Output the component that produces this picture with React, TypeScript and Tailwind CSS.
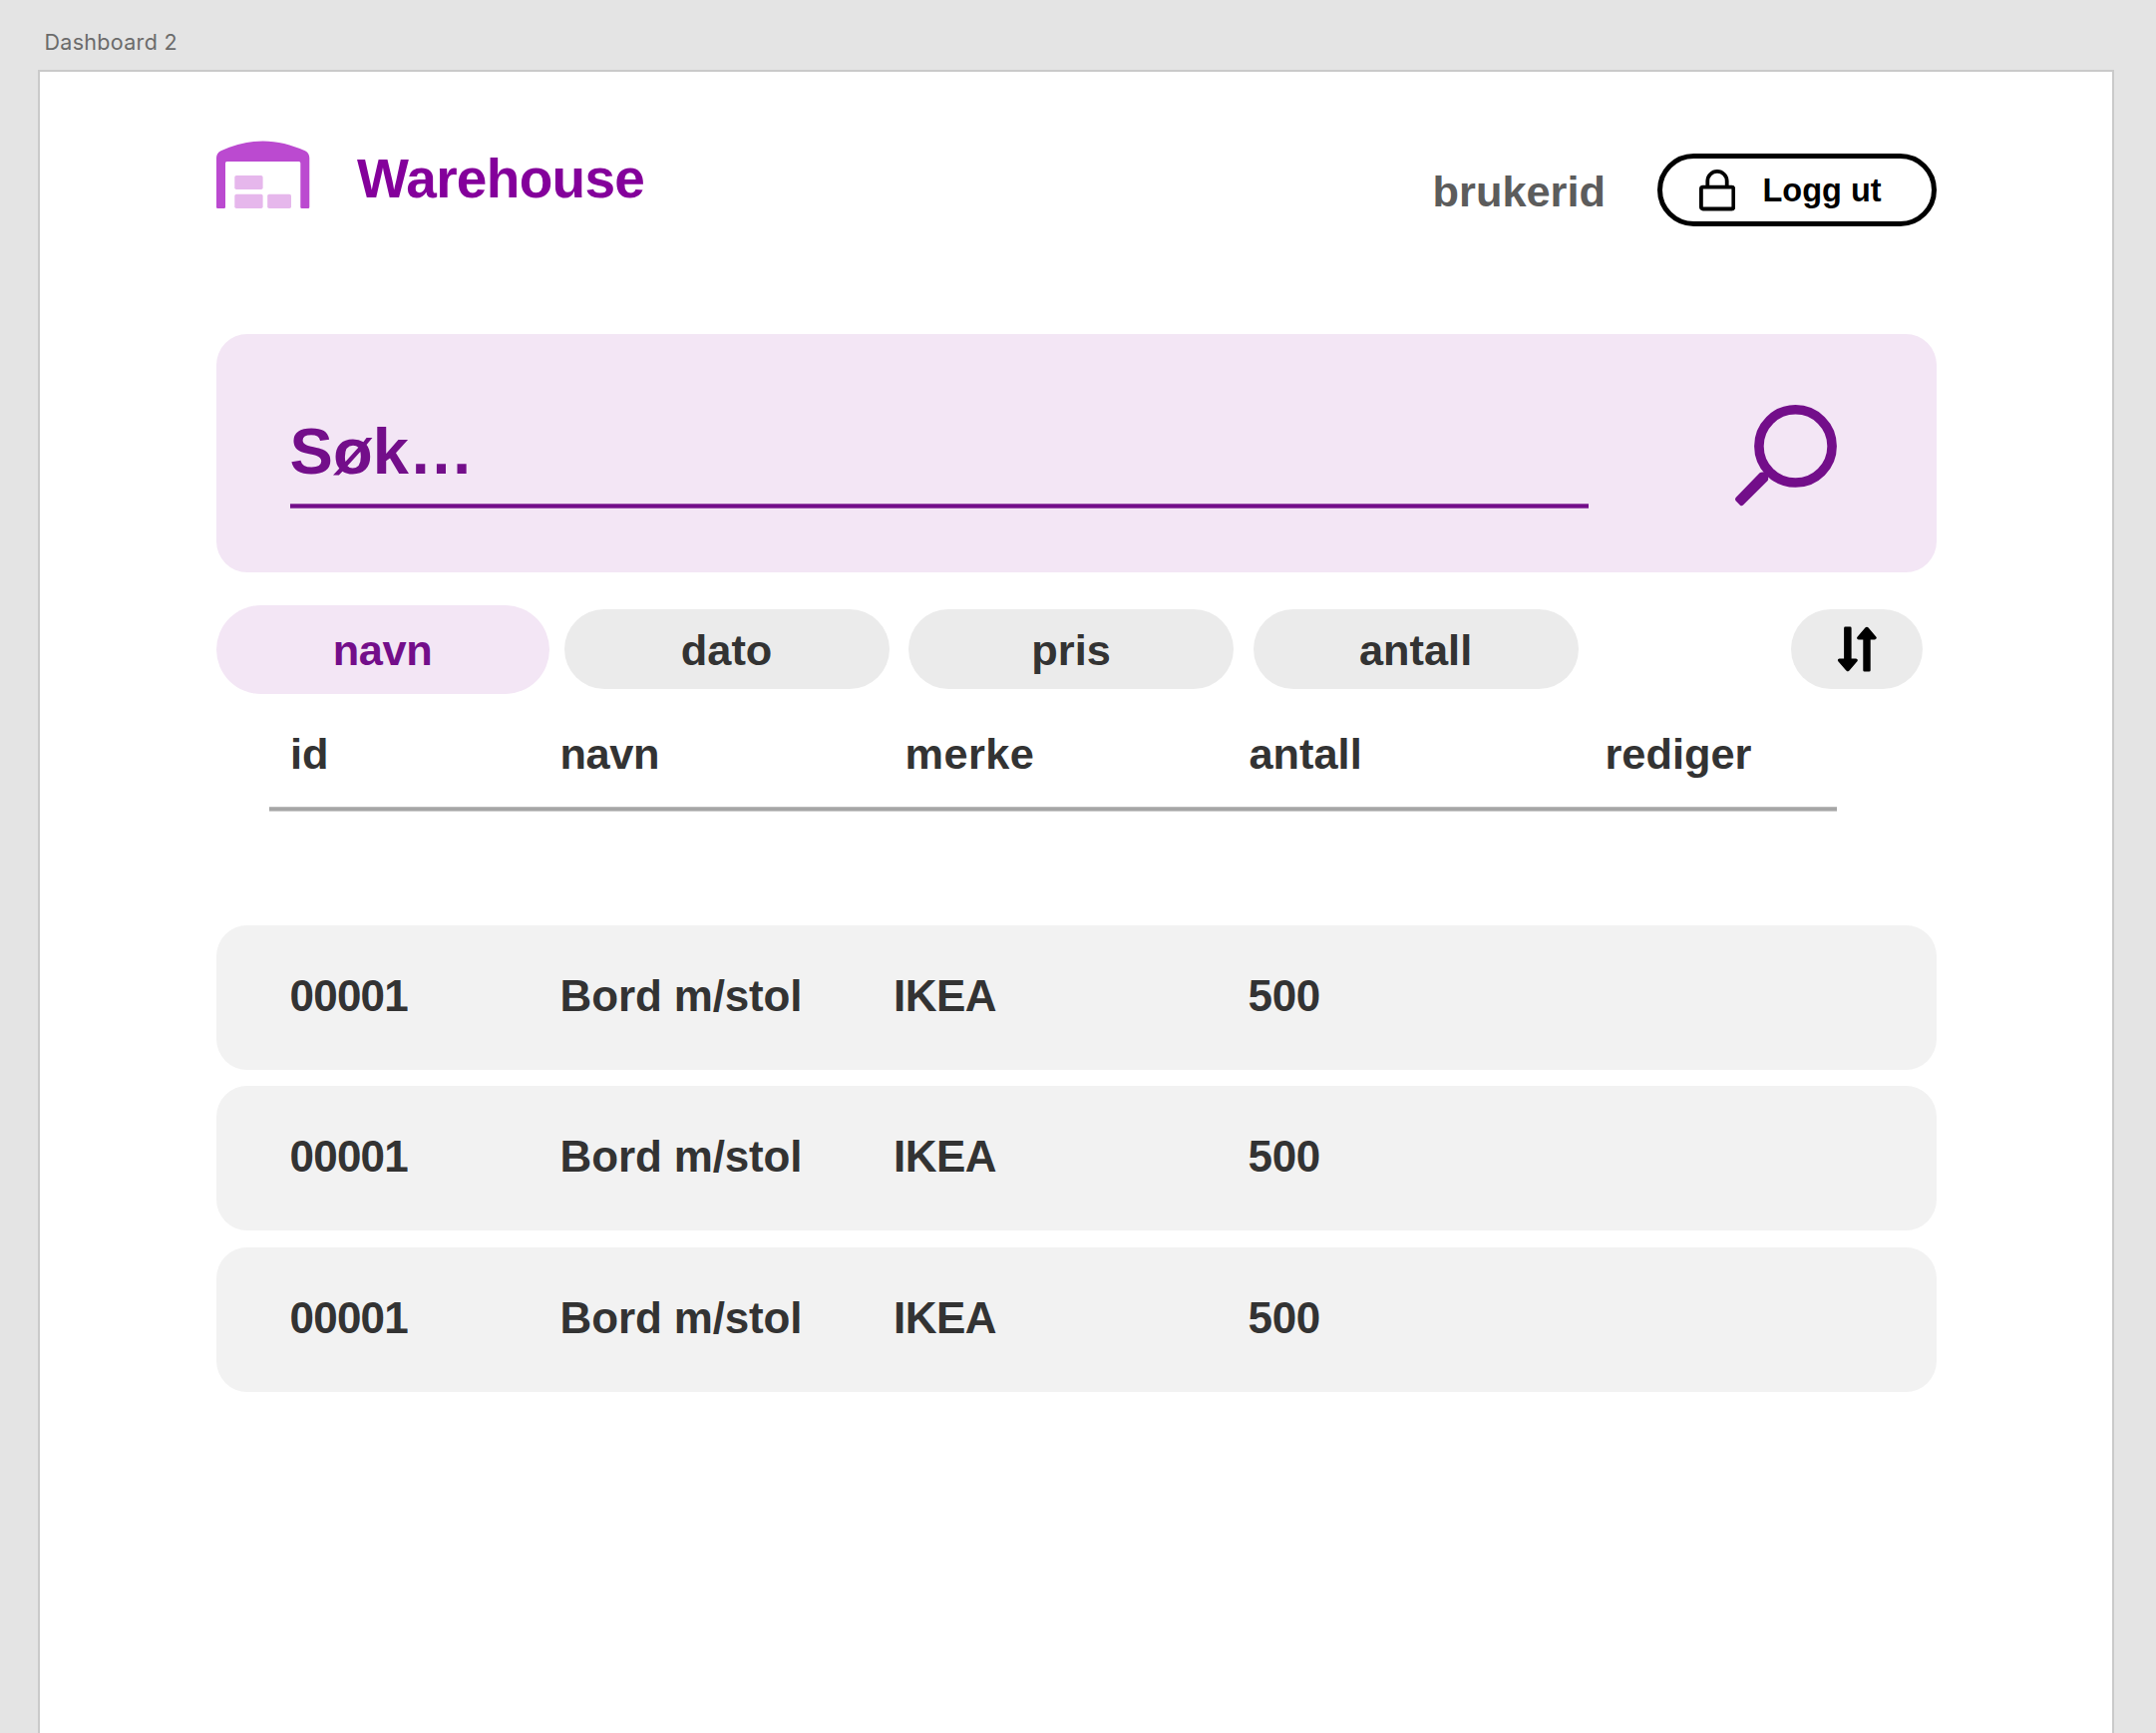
const items = [
  { id: '00001', name: 'Bord m/stol', brand: 'IKEA', amount: '500' },
  { id: '00001', name: 'Bord m/stol', brand: 'IKEA', amount: '500' },
  { id: '00001', name: 'Bord m/stol', brand: 'IKEA', amount: '500' },
];

const filters = ['dato', 'pris', 'antall'];

function WarehouseLogo() {
  return (
    <svg width="94" height="69" viewBox="0 0 94 69" className="mt-[69px] shrink-0">
      <path
        d="M0 66.700V17.500Q0 12.500 4.500 10.200C18 4 32 .4 46.700 .4S75 4 89 10.200Q93.300 12.500 93.300 17.500V66.700Q93.300 68 92 68H85.600Q84.300 68 84.300 66.700V22.500Q84.300 21 82.800 21H10.500Q9 21 9 22.500V66.700Q9 68 7.700 68H1.300Q0 68 0 66.700Z"
        fill="#bb4ad0"
      />
      <rect x="18.300" y="35" width="28.300" height="14" rx="1.800" fill="#e6b7ec" />
      <rect x="18.300" y="53.800" width="28.300" height="14.200" rx="1.800" fill="#e6b7ec" />
      <rect x="51.200" y="53.800" width="23.800" height="14.200" rx="1.800" fill="#e6b7ec" />
    </svg>
  );
}

function LockIcon() {
  return (
    <svg width="36" height="42" viewBox="0 0 36 42" fill="none" stroke="#000" strokeWidth="3.800" className="shrink-0">
      <rect x="1.900" y="17.600" width="32.400" height="21.900" rx="1.800" />
      <path d="M8.300 17V11.600a9.700 9.700 0 0 1 19.400 0V17" />
    </svg>
  );
}

function SearchIcon() {
  return (
    <svg width="103" height="103" viewBox="0 0 103 103" className="shrink-0">
      <circle cx="61.500" cy="41.400" r="36.600" fill="none" stroke="#730e8a" strokeWidth="9.600" />
      <path
        d="M25.600 68.300Q26.600 67.500 28 67.500L31.500 67.300L34.300 70.200L34.200 74.200Q34.200 75.500 33.200 76.500L9 100.600Q7.500 102 6 100.700L1.600 96.300Q.2 94.700 1.600 93Z"
        fill="#730e8a"
      />
    </svg>
  );
}

function SortIcon() {
  return (
    <svg width="40" height="46" viewBox="0 0 40 46" fill="#000">
      <path d="M8.500.6H13.200Q14.600.6 14.600 2V32.600H19Q21.400 33 20.600 35L12.500 44.600Q10.900 46.200 9.300 44.600L1.100 35Q.3 33 2.500 32.600H7.100V2Q7.100.6 8.500.6Z" />
      <path d="M27.700 45.600H32.300Q33.700 45.600 33.700 44.200V13.400H38Q40.300 13 39.600 11L31.600 1.600Q30 0 28.400 1.600L20.300 11Q19.500 13 21.800 13.400H26.300V44.200Q26.300 45.600 27.700 45.600Z" />
    </svg>
  );
}

export default function App() {
  return (
    <div className="h-[1738px] w-[2162px] overflow-hidden bg-[#e4e4e4] font-['Liberation_Sans',Arial,sans-serif] font-bold text-[#333333]">
      <div className="h-[70px] pt-[28px] pl-[44.500px] font-['Inter',sans-serif] text-[21.500px] leading-[28px] font-normal tracking-[0.300px] text-[#6b6b6b]">
        Dashboard 2
      </div>

      <main className="ml-[38px] flex h-[1700px] w-[2082px] flex-col border-2 border-[#cacaca] bg-white pr-[176px] pl-[176.600px]">
        <header className="flex h-[263px] items-start">
          <WarehouseLogo />
          <h1 className="mt-[76px] ml-[47.500px] text-[55px] leading-[62px] tracking-[-0.700px] text-[#84009b]">Warehouse</h1>
          <span className="mt-[96px] ml-auto text-[43.350px] leading-[48px] text-[#5c5c5c]">brukerid</span>
          <button className="mt-[82px] ml-[52px] flex h-[73px] w-[280px] rounded-full border-[5px] border-black pt-[11px] pl-[37px] font-bold text-black">
            <LockIcon />
            <span className="mt-[3px] ml-[27.500px] text-[32.500px] leading-[36px]">Logg ut</span>
          </button>
        </header>

        <section className="flex h-[239px] shrink-0 rounded-[31px] bg-[#f3e6f5] pl-[74px]">
          <div className="mt-[81px] h-[94px] w-[1302px]">
            <div className="h-[89px] text-[65px] leading-[73px] tracking-[0.100px] text-[#730e8a]">Søk…</div>
            <div className="h-[5px] border-y border-[#9950a9] bg-[#730e8a]" />
          </div>
          <div className="mt-[71px] ml-[146px]">
            <SearchIcon />
          </div>
        </section>

        <nav className="mt-[33px] flex h-[89px] text-[43.350px] leading-[48px]">
          <button className="mr-[15px] flex h-[89px] w-[334px] items-center justify-center rounded-full bg-[#f3e6f5] pt-px tracking-[-0.400px] text-[#730e8a]">
            navn
          </button>
          <div className="mt-1 flex gap-[19.500px]">
            {filters.map((label) => (
              <button
                key={label}
                className="flex h-[80px] w-[326px] items-center justify-center rounded-full bg-[#ebebeb] pt-0.5"
              >
                {label}
              </button>
            ))}
          </div>
          <button className="mt-1 mr-[14.500px] ml-auto flex h-[80px] w-[132px] items-center justify-center rounded-full bg-[#ebebeb]">
            <SortIcon />
          </button>
        </nav>

        <div className="mt-[36px] grid grid-cols-[270.500px_346px_345px_1fr_auto] pl-[74.400px] text-[43.350px] leading-[48px]">
          <span>id</span>
          <span className="tracking-[-0.400px]">navn</span>
          <span className="tracking-[0.400px]">merke</span>
          <span>antall</span>
          <span className="w-[332.500px]">rediger</span>
        </div>
        <div className="mt-[29px] mr-[100px] ml-[53.400px] h-[5px] shrink-0 border-t border-b border-t-[#bababa] border-b-[#cfcfcf] bg-[#a6a6a6]" />

        <div className="mt-[114px] flex flex-col gap-[16.300px]">
          {items.map((item, index) => (
            <div
              key={index}
              className="grid h-[145px] grid-cols-[271px_334.500px_355.500px_1fr] rounded-[31px] bg-[#f2f2f2] pt-[46px] pl-[74px] text-[44px] leading-[49px]"
            >
              <span className="tracking-[-0.800px]">{item.id}</span>
              <span className="tracking-[-0.150px]">{item.name}</span>
              <span className="tracking-[-0.600px]">{item.brand}</span>
              <span className="tracking-[-0.400px]">{item.amount}</span>
            </div>
          ))}
        </div>
      </main>
    </div>
  );
}
